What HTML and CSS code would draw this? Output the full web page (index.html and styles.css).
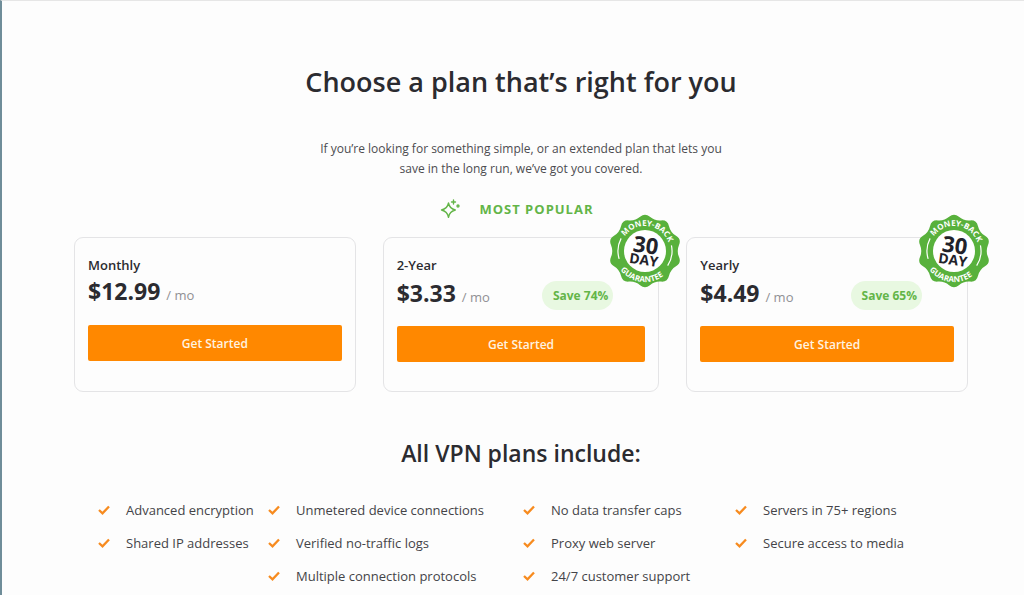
FILE: index.html
```html
<!DOCTYPE html>
<html lang="en">
<head>
    <meta charset="UTF-8">
    <meta name="viewport" content="width=device-width, initial-scale=1.0">
    <title>Choose a plan</title>
    <link rel="stylesheet" href="styles.css">
</head>
<body>
    <!-- Shared shapes -->
    <svg class="defs" aria-hidden="true">
        <defs>
            <path id="arc-top" d="M-25 0A25 25 0 0 1 25 0"/>
            <path id="arc-bottom" d="M-31 0A31 31 0 0 0 31 0"/>
            <symbol id="check" viewBox="0 0 12 10">
                <path d="M1 5L4.5 8.3L11 1.5" fill="none" stroke="#f78b1f" stroke-width="2.3"/>
            </symbol>
            <symbol id="seal" viewBox="-38 -38 76 76">
                <path fill="#58b13c" d="M-4.9-34.2Q0-38.5 4.9-34.2Q9.7-30 16.2-30.6Q22.6-31.1 24-24.8Q25.5-18.5 31-15.2Q36.6-11.9 34-6Q31.5 0 34 6Q36.6 11.9 31 15.2Q25.5 18.5 24 24.8Q22.6 31.1 16.2 30.6Q9.7 30 4.9 34.2Q0 38.5-4.9 34.2Q-9.7 30-16.2 30.6Q-22.6 31.1-24 24.8Q-25.5 18.5-31 15.2Q-36.6 11.9-34 6Q-31.5 0-34-6Q-36.6-11.9-31-15.2Q-25.5-18.5-24-24.8Q-22.6-31.1-16.2-30.6Q-9.7-30-4.9-34.2Z"/>
                <circle r="21" fill="#fff"/>
                <g transform="rotate(8)">
                    <path d="M-25.4-9.2A27 27 0 0 0-24.5 11.4M25.4-9.2A27 27 0 0 1 24.5 11.4" fill="none" stroke="#fff" stroke-width="1.2"/>
                    <text class="seal-ring"><textPath href="#arc-top" startOffset="50%">MONEY-BACK</textPath></text>
                    <text class="seal-ring"><textPath href="#arc-bottom" startOffset="50%">GUARANTEE</textPath></text>
                    <text class="seal-days" y="2">30</text>
                    <text class="seal-unit" y="14">DAY</text>
                </g>
            </symbol>
        </defs>
    </svg>

    <main class="pricing">
        <h1>Choose a plan that’s right for you</h1>
        <p class="intro">If you’re looking for something simple, or an extended plan that lets you save in the long run, we’ve got you covered.</p>

        <div class="popular">
            <svg width="20" height="20" viewBox="0 0 20 20" fill="none" stroke="#63b548" stroke-width="1.4" stroke-linejoin="round" stroke-linecap="round" aria-hidden="true">
                <path d="M8.5 4C9.3 8.2 11 10 15.3 11C11 12 9.3 13.8 8.5 18.3C7.7 13.8 6 12 1.5 11C6 10 7.7 8.2 8.5 4Z"/>
                <path d="M13.5 1v4M11.5 3h4"/>
                <circle cx="18" cy="7" r="1"/>
            </svg>
            <span>MOST POPULAR</span>
        </div>

        <div class="plans">
            <section class="plan">
                <h2>Monthly</h2>
                <div class="price-row price-row-plain">
                    <p class="price">$12.99 <span>/ mo</span></p>
                </div>
                <button type="button" class="btn">Get Started</button>
            </section>

            <section class="plan">
                <svg class="seal" role="img" aria-label="30 day money-back guarantee"><use href="#seal"/></svg>
                <h2>2-Year</h2>
                <div class="price-row">
                    <p class="price">$3.33 <span>/ mo</span></p>
                    <span class="save">Save 74%</span>
                </div>
                <button type="button" class="btn">Get Started</button>
            </section>

            <section class="plan">
                <svg class="seal" role="img" aria-label="30 day money-back guarantee"><use href="#seal"/></svg>
                <h2>Yearly</h2>
                <div class="price-row">
                    <p class="price">$4.49 <span>/ mo</span></p>
                    <span class="save">Save 65%</span>
                </div>
                <button type="button" class="btn">Get Started</button>
            </section>
        </div>

        <h2 class="include-title">All VPN plans include:</h2>
        <div class="features">
            <ul>
                <li><svg><use href="#check"/></svg>Advanced encryption</li>
                <li><svg><use href="#check"/></svg>Shared IP addresses</li>
            </ul>
            <ul>
                <li><svg><use href="#check"/></svg>Unmetered device connections</li>
                <li><svg><use href="#check"/></svg>Verified no-traffic logs</li>
                <li><svg><use href="#check"/></svg>Multiple connection protocols</li>
            </ul>
            <ul>
                <li><svg><use href="#check"/></svg>No data transfer caps</li>
                <li><svg><use href="#check"/></svg>Proxy web server</li>
                <li><svg><use href="#check"/></svg>24/7 customer support</li>
            </ul>
            <ul>
                <li><svg><use href="#check"/></svg>Servers in 75+ regions</li>
                <li><svg><use href="#check"/></svg>Secure access to media</li>
            </ul>
        </div>
    </main>
</body>
</html>
```
FILE: styles.css
```css
* {
    box-sizing: border-box;
}

body {
    min-height: 100vh;
    margin: 0;
    border-left: 2px solid #6f8d99;
    border-top: 1px solid #e6e6e6;
    background: #fdfdfd;
    color: #2b2b30;
    font-family: "Open Sans", "Noto Sans", sans-serif;
    font-size: 14px;
}

h1, h2, p, ul {
    margin: 0;
    padding: 0;
}

.defs {
    position: absolute;
    width: 0;
    height: 0;
}

.pricing {
    padding: 63px 56px 0 72px;
}

h1 {
    font-size: 27px;
    font-weight: 600;
    line-height: 36px;
    text-align: center;
}

.intro {
    max-width: 420px;
    margin: 39px auto 0;
    color: #4c4c50;
    font-size: 12px;
    line-height: 20px;
    text-align: center;
}

.popular {
    display: flex;
    align-items: center;
    justify-content: center;
    gap: 19px;
    height: 20px;
    margin-top: 20px;
    padding-right: 8px;
    color: #63b548;
    font-size: 13px;
    font-weight: 700;
    letter-spacing: 1px;
}

/* Plan cards */
.plans {
    display: grid;
    grid-template-columns: 282fr 277fr 282fr;
    gap: 27px;
    margin-top: 18px;
}

.plan {
    position: relative;
    padding: 16px 13px 29px;
    border: 1px solid #e4e4e6;
    border-radius: 9px;
}

.plan h2 {
    font-size: 13px;
    font-weight: 600;
    line-height: 22px;
}

.price-row {
    display: flex;
    align-items: center;
    justify-content: space-between;
    height: 38px;
    margin-bottom: 12px;
    padding-right: 32px;
}

.price-row-plain {
    height: 34px;
    margin-bottom: 15px;
}

.price {
    font-size: 23px;
    font-weight: 700;
    line-height: 31px;
}

.price span {
    color: #909094;
    font-size: 13px;
    font-weight: 400;
}

.save {
    padding: 0 5px 0 11px;
    border-radius: 15px;
    background: #e8f8e1;
    color: #63b548;
    font-size: 12px;
    font-weight: 700;
    line-height: 29px;
}

.btn {
    display: block;
    width: 100%;
    height: 36px;
    border: none;
    border-radius: 2px;
    background: #ff8800;
    color: #fff3e0;
    font-family: inherit;
    font-size: 12px;
    font-weight: 600;
    cursor: pointer;
}

/* Guarantee seal over the card corner */
.seal {
    position: absolute;
    top: -25px;
    right: -25px;
    width: 76px;
    height: 76px;
}

.seal-ring {
    fill: #fff;
    font-size: 8px;
    font-weight: 700;
    text-anchor: middle;
}

.seal-days {
    fill: #22222a;
    font-size: 22px;
    font-weight: 700;
    text-anchor: middle;
}

.seal-unit {
    fill: #22222a;
    font-size: 14px;
    font-weight: 700;
    text-anchor: middle;
}

/* Feature list */
.include-title {
    margin-top: 45px;
    font-size: 23px;
    font-weight: 600;
    line-height: 32px;
    text-align: center;
}

.features {
    display: grid;
    grid-template-columns: 170fr 255fr 212fr 233fr;
    margin-top: 24px;
    padding-left: 24px;
}

.features ul {
    list-style: none;
}

.features li {
    display: flex;
    align-items: center;
    gap: 16px;
    height: 33px;
    color: #444448;
    font-size: 13px;
    white-space: nowrap;
}

.features svg {
    flex: none;
    width: 12px;
    height: 10px;
}
```
